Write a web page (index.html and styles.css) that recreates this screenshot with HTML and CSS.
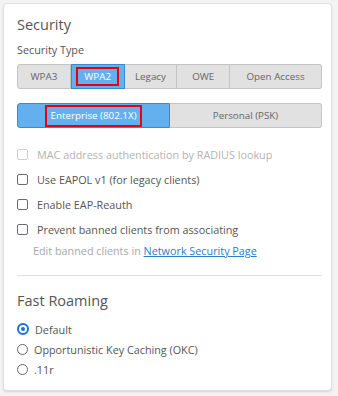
FILE: index.html
```html
<!DOCTYPE html>
<html lang="en">
<head>
    <meta charset="UTF-8">
    <title>Security Settings</title>
    <link rel="stylesheet" href="styles.css">
</head>
<body>
    <div class="card">
        <h2 class="section-title">Security</h2>
        <div class="field-label">Security Type</div>

        <div class="segmented">
            <button class="seg">WPA3</button>
            <button class="seg active"><span class="mark">WPA2</span></button>
            <button class="seg">Legacy</button>
            <button class="seg">OWE</button>
            <button class="seg wide">Open Access</button>
        </div>

        <div class="segmented toggle">
            <button class="seg active"><span class="mark">Enterprise (802.1X)</span></button>
            <button class="seg">Personal (PSK)</button>
        </div>

        <div class="options">
            <label class="check disabled"><span class="box"></span>MAC address authentication by RADIUS lookup</label>
            <label class="check"><span class="box"></span>Use EAPOL v1 (for legacy clients)</label>
            <label class="check"><span class="box"></span>Enable EAP-Reauth</label>
            <label class="check"><span class="box"></span>Prevent banned clients from associating</label>
            <div class="note">Edit banned clients in <a href="#">Network Security Page</a></div>
        </div>

        <hr class="divider">

        <h2 class="section-title">Fast Roaming</h2>
        <div class="radios">
            <label class="radio checked"><span class="dot"></span>Default</label>
            <label class="radio"><span class="dot"></span>Opportunistic Key Caching (OKC)</label>
            <label class="radio"><span class="dot"></span>.11r</label>
        </div>
    </div>
</body>
</html>
```

FILE: styles.css
```css
body {
    margin: 0;
    padding: 3px 6px 4px 3px;
    background: #f3f3f3;
    font-family: 'Open Sans', sans-serif;
    color: #555;
}
.card {
    background: #fff;
    border: 1px solid #e0e0e0;
    border-radius: 4px;
    box-shadow: 0 1px 2px rgba(0, 0, 0, 0.12);
    padding: 10px 9px 11px 13px;
}
.section-title {
    margin: 0;
    font-size: 14.5px;
    font-weight: 400;
    line-height: 22px;
    color: #555;
}
.field-label {
    margin-top: 6px;
    font-size: 10.8px;
    line-height: 16px;
}
.segmented {
    display: flex;
    margin-top: 6px;
    height: 25px;
}
.seg {
    flex: 53 0 0;
    margin: 0;
    padding: 0;
    height: 25px;
    background: #e1e1e1;
    border: 1px solid #c4c4c4;
    border-left: none;
    font-family: 'Open Sans', sans-serif;
    font-size: 9.8px;
    color: #666;
    display: flex;
    align-items: center;
    justify-content: center;
}
.seg:first-child {
    border-left: 1px solid #c4c4c4;
    border-radius: 3px 0 0 3px;
}
.seg:last-child {
    border-radius: 0 3px 3px 0;
}
.seg.wide {
    flex-grow: 93;
}
.seg.active {
    background: #64b0ee;
    border: 1px solid #3a8ad0;
    color: #fff;
}
.mark {
    border: 2px solid #e8000d;
    padding: 0 6px;
    line-height: 15px;
}
.toggle {
    margin-top: 14px;
}
.toggle .seg {
    flex: 1 0 0;
}
.toggle .mark {
    line-height: 18px;
    padding: 0 3px;
}
.options {
    margin-top: 14px;
}
.check {
    display: flex;
    align-items: center;
    height: 25px;
    font-size: 10.8px;
}
.check .box {
    width: 9px;
    height: 9px;
    border: 1.5px solid #6b6b75;
    border-radius: 2px;
    margin-right: 9px;
}
.check.disabled {
    color: #b3b3b3;
}
.check.disabled .box {
    border-color: #cfcfcf;
}
.note {
    padding-left: 16px;
    font-size: 10.8px;
    line-height: 18px;
    color: #a8a8a8;
}
.note a {
    color: #2a80cc;
}
.divider {
    margin: 15px 0 0 0;
    border: none;
    border-top: 1px solid #e2e2e2;
}
.divider + .section-title {
    margin-top: 14px;
}
.radios {
    margin-top: 7px;
}
.radio {
    display: flex;
    align-items: center;
    height: 20px;
    font-size: 10.8px;
}
.radio .dot {
    width: 9px;
    height: 9px;
    border: 1.5px solid #666;
    border-radius: 50%;
    margin-right: 6px;
    position: relative;
}
.radio.checked .dot {
    border: 2px solid #1a6fd8;
    width: 8px;
    height: 8px;
}
.radio.checked .dot::after {
    content: "";
    position: absolute;
    left: 2px;
    top: 2px;
    width: 4px;
    height: 4px;
    border-radius: 50%;
    background: #1a6fd8;
}
```
